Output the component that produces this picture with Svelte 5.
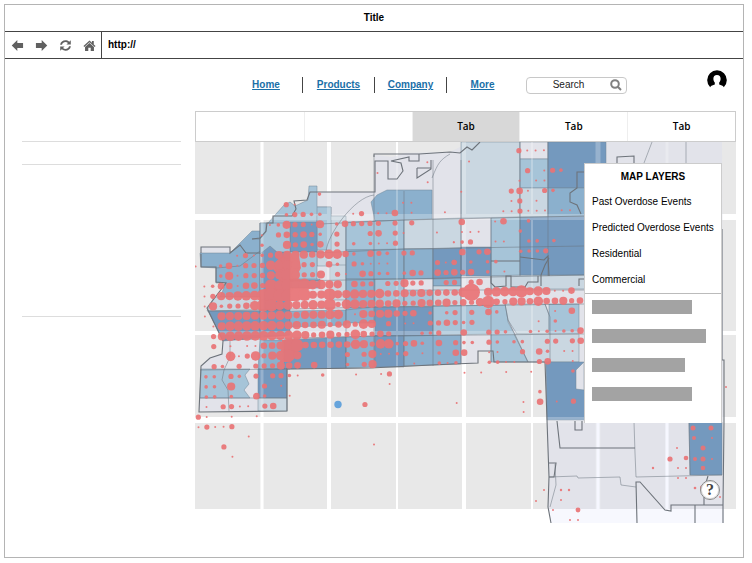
<script>
  const navLinks = ['Home', 'Products', 'Company', 'More'];
  const tabs = ['', '', 'Tab', 'Tab', 'Tab'];
  let active = $state(2);

  const layers = ['Past Overdose Events', 'Predicted Overdose Events', 'Residential', 'Commercial'];
  const bars = [100, 114, 93, 100];

  const shade = { d: '#7499be', m: '#8bb0cd', l: '#a6c4d8', p: '#cad7e1', v: '#e2e3ea' };

  const land =
    'M201 247H230V253L240 243 252 231H260V223H268L274 216 284 205 290 202 295 206 308 200 309 186H317V192H375V155L392 157 405 153 450 152 470 142H722L724 523H551L548 507 549 477 547 420 545 362H494V351H478V363L453 364 370 368 287 369V411L199 412 201 365 210 357 222 354 223 341 207 308 226 283H216V268L201 267Z';

  // Census tracts: [shade, outline points]
  const tracts = [
    ['m', '200,253 230,253 240,243 252,231 260,231 260,297 220,297 226,283 216,283 216,268 201,267'],
    ['l', '260,223 268,223 284,205 290,202 295,206 308,200 309,186 317,186 317,207 331,207 331,216 330,252 260,252'],
    ['p', '317,216 346,216 346,266 317,266'],
    ['l', '317,207 331,207 331,250 317,250'],
    ['d', '290,222 317,222 317,252 290,252'],
    ['d', '262,252 270,246 277,252 290,252 290,311 260,311'],
    ['l', '290,252 317,252 317,280 290,280'],
    ['l', '260,223 290,223 290,252 277,252 270,246 260,254'],
    ['p', '214,297 260,297 260,311 207,311'],
    ['m', '290,279 320,279 320,288 290,288'],
    ['p', '330,265 346,265 346,300 330,300'],
    ['d', '208,311 290,311 290,335 223,341'],
    ['m', '290,311 346,310 346,325 290,327'],
    ['m', '260,340 290,340 290,369 258,369'],
    ['d', '284,340 346,337 346,368 284,369'],
    ['l', '201,369 250,369 245,375 249,384 244,390 250,398 200,398'],
    ['d', '258,369 287,369 287,398 258,398'],
    ['p', '258,398 287,398 287,411 258,411'],
    ['m', '371,202 377,195 387,190 432,190 432,219 375,221'],
    ['l', '346,222 404,220 404,250 346,250'],
    ['p', '404,220 461,218 461,248 404,249'],
    ['m', '346,250 404,249 404,279 346,279'],
    ['m', '404,249 433,249 433,279 404,279'],
    ['d', '433,249 461,248 461,278 433,279'],
    ['p', '461,142 520,142 520,217 461,218'],
    ['v', '520,142 548,142 548,159 520,159'],
    ['l', '520,159 548,159 548,188 520,188'],
    ['p', '520,188 548,188 548,217 520,217'],
    ['d', '548,142 606,142 606,188 548,188'],
    ['m', '548,188 606,188 606,217 548,217'],
    ['l', '491,218 520,217 520,275 491,276'],
    ['d', '520,217 606,216 606,275 520,275'],
    ['d', '461,247 491,247 491,276 461,276'],
    ['m', '346,279 375,279 375,307 346,310'],
    ['l', '375,279 404,279 404,307 375,307'],
    ['l', '404,290 433,290 433,307 404,307'],
    ['m', '433,279 461,278 461,286 433,286'],
    ['p', '433,286 461,286 461,306 433,306'],
    ['p', '491,276 606,275 606,289 491,289'],
    ['m', '346,310 375,307 375,323 346,323'],
    ['d', '375,307 433,307 433,336 375,336'],
    ['l', '433,306 506,305 508,322 518,341 528,362 491,362 491,334 433,335'],
    ['p', '505,304 545,304 549,315 549,334 517,334 508,320'],
    ['l', '549,304 579,304 579,334 549,334'],
    ['p', '514,334 579,334 579,362 528,362'],
    ['m', '346,337 375,336 375,367 346,368'],
    ['d', '375,336 404,336 404,367 375,367'],
    ['m', '404,336 461,335 461,364 404,366'],
    ['d', '546,362 606,362 606,420 547,420'],
    ['v', '576,370 584,362 584,390 576,389'],
    ['d', '689,422 722,422 722,475 690,475']
  ];

  // Event grid: [row, first column, size of each point]
  const series = [
    [0, 39, '3111'], [1, 33, '1'], [1, 28, '1'], [2, 22, '1'], [3, 28, '1'],
    [2, 40, '3.132'], [3, 39, '1.11'], [4, 32, '1'], [4, 38, '341.32'],
    [5, 38, '13.1'], [6, 37, '113111.11'], [7, 32, '4'], [7, 36, '14..2'],
    [8, 32, '111....2'], [9, 31, '123..11..22.2'], [10, 32, '4.34...2223'],
    [11, 31, '3.2.22'], [12, 31, '434.2.1'],
    [4, 15, '2'], [5, 11, '31'], [6, 11, '23322'], [5, 25, '11'],
    [6, 19, '13.114.1...1'], [7, 9, '125331502433330303'],
    [8, 8, '1.343432.3...34.31...1'], [9, 8, '2..534240302.2113......1'],
    [10, 5, '1312355554566420432033'], [11, 0, '1..241333666533042032111.....313'],
    [12, 3, '25133355753350310432202430433'],
    [13, 1, '1244144376767665504330335330033034'],
    [14, 1, '13556667877775575565564454544446'],
    [15, 1, '1523346776655657366555453354453335'],
    [16, 1, '1.5555555654555660154554340202300'],
    [17, 2, '15666666555445345365.3.11.3343'],
    [18, 2, '356666666665345336434300022300'],
    [19, 2, '3.1.11445774444446536623420403'],
    [20, 4, '613635675.....3.3511230102034'],
    [21, 2, '32.3.33354404...2.35....1..21'],
    [22, 1, '22.32.3.3321..2...1..13........1.1..1..1'],
    [23, 1, '22.5...3.1............1'], [24, 1, '22.2..42..1'],
    [25, 1, '1.3311.34'], [25, 20, '3..........1.......1'],
    [26, 0, '31..1..1'], [27, 0, '13113'], [28, 6, '1'], [29, 3, '3'], [30, 4, '1'], [29, 21, '1'],
    [14, 33, '9.56667565114.1'],
    [15, 32, '42.7435546445344'], [16, 33, '3.42......1.4'], [17, 31, '123.......1.2'],
    [18, 32, '4..332..2121224'], [19, 31, '222.32.22..33.34'],
    [20, 31, '42..11..3.42.11'], [21, 31, '2...2211..34..1'],
    [24, 41, '2'], [25, 41, '4.1.3'], [26, 39, '1'], [22, 45, '2']
  ];
  const radius = [0, 1, 1.8, 2.6, 3.3, 4.1, 4.8, 6.2, 7.2, 8.6];

  const events = series.flatMap(([row, first, sizes]) =>
    [...sizes].flatMap((c, i) => {
      const r = radius[Number(c)] || 0;
      if (!r) return [];
      const x = 195.6 + 8.34 * (first + i);
      const y = 155.9 + 10.05 * row;
      return [{ x: x + 0.018 * (y - 265), y: y - 0.016 * (x - 195.6), r }];
    })
  );

  const scattered = [
    [693, 428, 2.5], [711, 428, 2.5], [694, 438, 2], [712, 438, 1], [703, 448, 2.5], [677, 448, 1],
    [670, 459, 2.6], [686, 458, 2.3], [695, 459, 2], [703, 459, 2.5], [712, 459, 1], [653, 468, 1.2],
    [678, 468, 1], [686, 468, 1], [703, 468, 2.3], [678, 478, 1], [686, 478, 1], [695, 488, 1.3],
    [703, 488, 3], [544, 490, 1], [536, 501, 1], [561, 490, 1.2], [569, 490, 1.2], [561, 500, 1],
    [553, 510, 1], [578, 510, 2.4], [570, 520, 1], [578, 520, 1], [720, 497, 1], [726, 387, 1]
  ];

  const meridians = [[262, 3], [329, 4], [397, 2], [464, 4], [532, 2], [598, 5], [667, 3]];
  const parallels = [[217, 6], [333, 4], [420, 6]];
</script>

{#snippet graticule()}
  {#each meridians as [x, w]}
    <path d="M{x} 142V509" stroke-width={w} />
  {/each}
  {#each parallels as [y, w]}
    <path d="M195 {y}H736" stroke-width={w} />
  {/each}
{/snippet}

<div class="window">
  <header class="title">Title</header>
  <div class="toolbar">
    <div class="controls">
      <button aria-label="Back">
        <svg viewBox="0 0 14 14"><path d="M.8 7 6.8 1V4.2H13V9.8H6.8V13Z" /></svg>
      </button>
      <button aria-label="Forward">
        <svg viewBox="0 0 14 14"><path d="M13.2 7 7.2 1V4.2H1V9.8H7.2V13Z" /></svg>
      </button>
      <button aria-label="Reload">
        <svg viewBox="0 0 14 14"><path d="M1.2 6.2C1.8 1.6 7.5-.1 11 2.9L12.7 1.3V6H8L9.7 4.3C7.3 2.3 4 3.4 3.2 6.2ZM12.8 7.8C12.2 12.4 6.5 14.1 3 11.1L1.3 12.7V8H6L4.3 9.7C6.7 11.7 10 10.6 10.8 7.8Z" /></svg>
      </button>
      <button aria-label="Home page">
        <svg viewBox="0 0 14 14"><path d="M7 1.5 9.6 4V2.2H11.6V5.8L13.5 7.6 12.6 8.5 7 3.5 1.4 8.5.5 7.6ZM7 4.3 11.8 8.5V13H8.3V9.4H5.7V13H2.2V8.5Z" /></svg>
      </button>
    </div>
    <input class="address" aria-label="Address" value="http://" />
  </div>

  <div class="content">
    <aside>
      <hr />
      <hr class="upper" />
      <hr class="lower" />
    </aside>

    <main>
      <div class="top">
        <nav>
          {#each navLinks as link}
            <a href="#{link}">{link}</a>
          {/each}
        </nav>
        <div class="search">
          <input aria-label="Search" placeholder="Search" />
          <svg viewBox="0 0 12 12"><circle cx="5" cy="5" r="3.8" /><path d="M7.8 7.8 11 11" /></svg>
        </div>
        <button class="avatar" aria-label="Account">
          <svg viewBox="0 0 20 20"><path d="M3.2 17.2A9.8 9.8 0 1 1 16.8 17.2C16 15.6 14 15.3 12.2 14.6V12.6C14.6 9.6 14 5 10 5S5.4 9.6 7.8 12.6V14.6C6 15.3 4 15.6 3.2 17.2Z" /></svg>
        </button>
      </div>

      <div class="tabs" role="tablist">
        {#each tabs as tab, i}
          <button
            role="tab"
            class:active={active === i}
            aria-selected={active === i}
            aria-label={tab ? undefined : 'Empty tab'}
            onclick={() => (active = i)}>{tab}</button>
        {/each}
      </div>

      <div class="map">
        <svg class="canvas" viewBox="195 142 541 381" role="img" aria-label="Overdose events map">
          <rect x="195" y="142" width="541" height="367" fill="#e8e8e8" />
          <g stroke="#fff">{@render graticule()}</g>
          <path d={land} fill={shade.v} />
          <g stroke="#708797" stroke-width=".5">
            {#each tracts as [tone, points]}
              <polygon {points} fill={shade[tone]} />
            {/each}
          </g>
          <path d="M549 509H724V523H551Z" fill="#f7f8fe" />
          <g stroke="#fff" opacity=".25">{@render graticule()}</g>
          <path d="M598 422V509M667 422V509" stroke="#f6f7ff" stroke-width="3" />

          <g class="thin">
            <path d="M216 268 240 266 260 251M252 239H260L266 232V223M346 222V368M374 155V367M404 191V366M433 160V366M461 160V364M491 218V362M520 142V276M548 142V276M326 252C327 235 354 197 374 195M432 178C438 163 440 160 450 154" />
            <path d="M320 224 404 220 584 216M317 253 404 249 584 246M290 281 404 279 584 275M208 311 375 307 584 304M223 340 375 336 584 334M200 370 287 369M200 398H287M230 341V357L224 370 222 380 228 390 229 411M260 223V340M461 290H584M433 290H461M505 304 508 320 518 341 528 362M545 304 550 317V362" />
            <path d="M549 477 577 476 578 478 620 477 621 485 636 487M634 422 635 453 636 477 722 475M689 422 690 475M555 464 556 485 550 507M652 142 644 163M686 142V163" />
          </g>
          <g class="border">
            <path d="M201 253V247H230V253L240 245 246 253H260M252 239 260 238 266 231 267 223 273 223V216H292L296 209 294 201 307 200 310 192H375V161H388V179H397L403 171 401 163 391 161 409 157V161H419V154H374V157M419 154 450 152 460 153 467 147 472 150 480 142M417 168V178L431 169V160M417 168H431" />
            <path d="M201 254V267H216V282L226 283 207 308 223 341 222 354 210 358 201 366 199 412 287 411V369L370 368 453 364 478 363V351H493L494 362H545L547 420 549 477 548 507 551 523M722 229V360H724V422L723 505V523M557 421 560 448H635M575 421V430H582V421M549 463H556L554 477H549M637 523 636 482 640 482 665 510 671 511V505H723M695 505V523M704 505V489L708 476" />
            <path d="M491 276V283L495 287 506 286V276H511V287H525L528 282H538V276M520 257 544 260 548 256 549 276M491 261H520M584 172H577V188L570 193V202L577 205 581 214" />
            <path d="M541 286V275L545 265 549 258M579 286V279H584M617 163V157L634 156V163" />
          </g>

          <g fill="#ea7476" opacity=".92">
            <path d="M279 258 288 252 299 256 301 268 296 277 308 284 316 287 303 291 296 301H262L252 298 264 289 278 286 279 276 272 268ZM282 340 297 338 298 352 291 362H280Z" />
            {#each events as e}
              <circle cx={e.x} cy={e.y} r={e.r} />
            {/each}
            {#each scattered as [x, y, r]}
              <circle cx={x} cy={y} {r} />
            {/each}
          </g>
          <circle cx="338" cy="404.5" r="3.7" fill="#66a4dc" />
        </svg>

        <section class="panel">
          <h2>MAP LAYERS</h2>
          <div class="layers">
            {#each layers as layer}
              <button>{layer}</button>
            {/each}
          </div>
          <div class="bars">
            {#each bars as width}
              <span style="width: {width}px"></span>
            {/each}
          </div>
        </section>
        <button class="help" aria-label="Help">?</button>
      </div>
    </main>
  </div>
</div>

<style>
  :global(body) {
    background: #fff;
    padding: 4px 8px 4px 4px;
    font: 10px/14px 'Liberation Sans', Arial, sans-serif;
    color: #000;
  }
  button, input {
    font: inherit;
    color: inherit;
    background: none;
    border: 0;
    padding: 0;
    margin: 0;
    border-radius: 0;
  }
  .window { border: 1px solid #b4b4b4; }
  .title {
    text-align: center;
    font-weight: bold;
    line-height: 26px;
  }
  .toolbar {
    display: flex;
    height: 26px;
    border-top: 1px solid #444;
    border-bottom: 1px solid #444;
  }
  .controls {
    display: flex;
    border-right: 1px solid #444;
  }
  .controls button {
    width: 24px;
    display: grid;
    place-items: center;
  }
  .controls svg {
    width: 13px;
    height: 13px;
    fill: #606060;
  }
  .address {
    flex: 1;
    min-width: 0;
    padding-left: 6px;
    font-weight: bold;
  }
  .content {
    display: grid;
    grid-template-columns: 190px minmax(0, 1fr);
    padding: 0 7px 34px 0;
  }
  aside { padding: 82px 14px 0 17px; }
  hr {
    border: 0;
    border-top: 1px solid #ddd;
    margin: 0;
  }
  .upper { margin-top: 22px; }
  .lower { margin-top: 151px; }
  .top {
    display: flex;
    align-items: center;
    height: 52px;
    padding-left: 35px;
  }
  nav { display: flex; }
  nav a {
    width: 72px;
    box-sizing: border-box;
    text-align: center;
    line-height: 16px;
    font-weight: bold;
    color: #1a6fa8;
    border-left: 1px solid #444;
  }
  nav a:first-child { border-left: 0; }
  .search {
    display: flex;
    align-items: center;
    width: 101px;
    height: 17px;
    box-sizing: border-box;
    margin-left: 8px;
    padding-right: 4px;
    border: 1px solid #c8c8c8;
    border-radius: 4px;
  }
  .search input {
    flex: 1;
    min-width: 0;
    text-align: center;
  }
  .search input::placeholder { color: #222; opacity: 1; }
  .search svg {
    width: 12px;
    height: 12px;
    fill: none;
    stroke: #808080;
    stroke-width: 2;
  }
  .avatar {
    margin: 0 9px 10px auto;
    width: 20px;
    height: 20px;
  }
  .avatar svg { display: block; width: 20px; height: 20px; }
  .tabs {
    display: grid;
    grid-template-columns: repeat(5, 1fr);
    height: 29px;
    border: 1px solid #ccc;
  }
  .tabs button {
    font: 600 10px/29px 'Open Sans', 'Noto Sans', sans-serif;
    border-left: 1px solid #eee;
  }
  .tabs button:first-child { border-left: 0; }
  .tabs .active { background: #d8d8d8; }
  .map { position: relative; }
  .canvas { display: block; width: 100%; height: auto; }
  .thin, .border { fill: none; stroke: #69737c; stroke-width: 0.5; }
  .border { stroke: #6d737a; stroke-width: 1.1; }
  .panel {
    position: absolute;
    top: 21px;
    right: 14px;
    width: 136px;
    background: #fff;
    border: 1px solid #ccc;
    border-bottom: 0;
  }
  h2 {
    margin: 0;
    font-size: 10px;
    line-height: 25px;
    text-align: center;
  }
  .layers {
    display: grid;
    border-bottom: 1px solid #bbb;
  }
  .layers button {
    text-align: left;
    line-height: 26px;
    padding-left: 7px;
    white-space: nowrap;
  }
  .bars {
    display: grid;
    gap: 15px;
    padding: 6px 7px 22px;
  }
  .bars span { height: 14px; background: #a3a3a3; }
  .help {
    position: absolute;
    right: 16px;
    bottom: 23px;
    width: 20px;
    height: 20px;
    border: 1px solid #888;
    border-radius: 50%;
    background: #fff;
    box-shadow: inset 0 0 0 1px #ddd;
    color: #444;
    font: bold 16px/18px 'Liberation Serif', serif;
  }
</style>
